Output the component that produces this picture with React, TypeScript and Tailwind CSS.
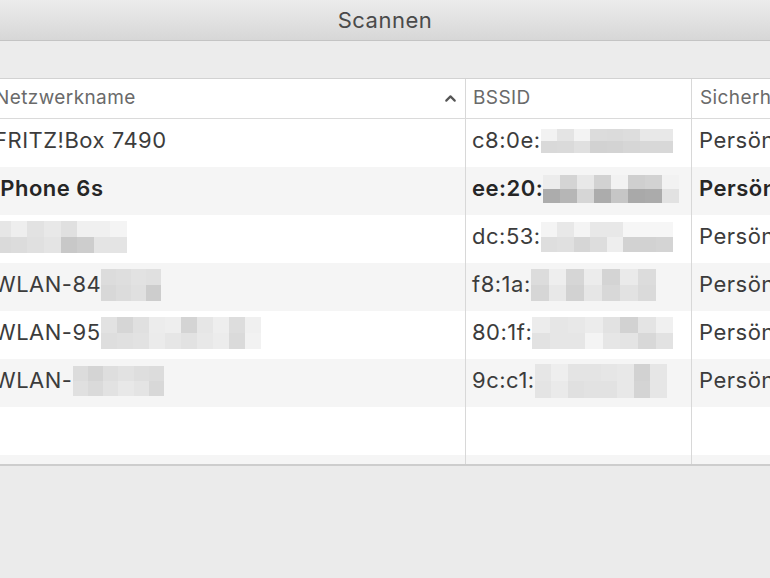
import { ChevronUp } from "lucide-react";

type Blur = { w: number; h: number; top: string[]; bottom: string[] };

type Row = {
  name: string;
  nameBlur?: Blur;
  bssid: string;
  bssidBlur: Blur;
  bold?: boolean;
};

const rows: Row[] = [
  {
    name: "FRITZ!Box 7490",
    bssid: "c8:0e:",
    bssidBlur: {
      w: 132,
      h: 24,
      top: ["#f2f2f2", "#e4e4e4", "#f3f3f3", "#dcdcdc", "#dbdbdb", "#dddddd", "#e8e8e8", "#e8e8e8"],
      bottom: ["#d9d9d9", "#dadada", "#e0e0e0", "#d2d2d2", "#d3d3d3", "#d6d6d6", "#d8d8d8", "#d8d8d8"],
    },
  },
  {
    name: "iPhone 6s",
    bold: true,
    bssid: "ee:20:",
    bssidBlur: {
      w: 136,
      h: 28,
      top: ["#ececec", "#d4d4d4", "#e8e8e8", "#d2d2d2", "#f2f2f2", "#cfcfcf", "#d2d2d2", "#f2f2f2"],
      bottom: ["#acacac", "#b6b6b6", "#d6d6d6", "#acacac", "#c6c6c6", "#a9a9a9", "#ababab", "#e2e2e2"],
    },
  },
  {
    name: "",
    nameBlur: {
      w: 133,
      h: 32,
      top: ["#e6e6e6", "#eeeeee", "#e2e2e2", "#e8e8e8", "#e0e0e0", "#f0f0f0", "#f0f0f0", "#f4f4f4"],
      bottom: ["#dadada", "#dcdcdc", "#e0e0e0", "#e4e4e4", "#c8c8c8", "#cdcdcd", "#e4e4e4", "#e4e4e4"],
    },
    bssid: "dc:53:",
    bssidBlur: {
      w: 132,
      h: 30,
      top: ["#f4f4f4", "#e8e8e8", "#f4f4f4", "#e8e8e8", "#e8e8e8", "#f6f6f6", "#f6f6f6", "#f6f6f6"],
      bottom: ["#dedede", "#e0e0e0", "#d6d6d6", "#dddddd", "#eeeeee", "#d2d2d2", "#d2d2d2", "#d4d4d4"],
    },
  },
  {
    name: "WLAN-84",
    nameBlur: {
      w: 60,
      h: 32,
      top: ["#dcdcdc", "#dedede", "#e2e2e2", "#e0e0e0"],
      bottom: ["#d8d8d8", "#dcdcdc", "#e0e0e0", "#cdcdcd"],
    },
    bssid: "f8:1a:",
    bssidBlur: {
      w: 125,
      h: 32,
      top: ["#dcdcdc", "#eeeeee", "#d6d6d6", "#ececec", "#d4d4d4", "#eaeaea", "#dcdcdc"],
      bottom: ["#d6d6d6", "#e8e8e8", "#d2d2d2", "#e6e6e6", "#d8d8d8", "#e2e2e2", "#dadada"],
    },
  },
  {
    name: "WLAN-95",
    nameBlur: {
      w: 160,
      h: 32,
      top: ["#e2e2e2", "#d6d6d6", "#e0e0e0", "#ececec", "#eeeeee", "#d4d4d4", "#e6e6e6", "#eeeeee", "#dddddd", "#f0f0f0"],
      bottom: ["#dedede", "#e0e0e0", "#e2e2e2", "#ebebeb", "#e6e6e6", "#e2e2e2", "#e8e8e8", "#ececec", "#dadada", "#f2f2f2"],
    },
    bssid: "80:1f:",
    bssidBlur: {
      w: 141,
      h: 32,
      top: ["#ececec", "#e6e6e6", "#e8e8e8", "#ececec", "#e2e2e2", "#d2d2d2", "#e4e4e4", "#f0f0f0"],
      bottom: ["#e2e2e2", "#e6e6e6", "#e6e6e6", "#f4f4f4", "#e6e6e6", "#e4e4e4", "#d8d8d8", "#e2e2e2"],
    },
  },
  {
    name: "WLAN-",
    nameBlur: {
      w: 92,
      h: 30,
      top: ["#dcdcdc", "#d4d4d4", "#dedede", "#e2e2e2", "#dedede", "#dcdcdc"],
      bottom: ["#e0e0e0", "#dadada", "#e2e2e2", "#e8e8e8", "#e4e4e4", "#d8d8d8"],
    },
    bssid: "9c:c1:",
    bssidBlur: {
      w: 132,
      h: 34,
      top: ["#e6e6e6", "#eeeeee", "#e4e4e4", "#e4e4e4", "#e6e6e6", "#e8e8e8", "#d2d2d2", "#e6e6e6"],
      bottom: ["#e4e4e4", "#eaeaea", "#e0e0e0", "#e2e2e2", "#e2e2e2", "#e8e8e8", "#d4d4d4", "#e6e6e6"],
    },
  },
];

function Pixels({ blur }: { blur: Blur }) {
  return (
    <span
      className="inline-flex flex-col shrink-0"
      style={{ width: blur.w, height: blur.h }}
    >
      <span className="flex flex-1">
        {blur.top.map((c, i) => (
          <span key={i} className="flex-1" style={{ backgroundColor: c }} />
        ))}
      </span>
      <span className="flex flex-1">
        {blur.bottom.map((c, i) => (
          <span key={i} className="flex-1" style={{ backgroundColor: c }} />
        ))}
      </span>
    </span>
  );
}

export default function App() {
  return (
    <div className="w-[770px] h-[578px] overflow-hidden bg-[#ebebeb] font-['Inter',sans-serif]">
      <div className="h-[41px] flex items-center justify-center bg-gradient-to-b from-[#ececec] to-[#d7d7d7] border-b border-[#c4c4c4] text-[22px] tracking-[0.5px] text-[#4a4a4a]">
        Scannen
      </div>
      <div className="h-[38px] bg-[#ececec] border-b border-[#d2d2d2]" />

      <div className="flex h-[40px] bg-white border-b border-[#dadada] text-[19px] tracking-[0.4px] text-[#6a6a6a]">
        <div className="w-[466px] shrink-0 border-r border-[#d8d8d8] flex items-center justify-between pr-[6px]">
          <span className="-ml-[5px]">Netzwerkname</span>
          <ChevronUp size={17} strokeWidth={3} className="text-[#555]" />
        </div>
        <div className="w-[226px] shrink-0 border-r border-[#d8d8d8] flex items-center pl-[7px]">
          BSSID
        </div>
        <div className="flex-1 flex items-center pl-[8px] whitespace-nowrap">
          Sicherheit
        </div>
      </div>

      <div className="h-[347px] overflow-hidden bg-white border-b-2 border-[#cdcdcd] text-[22px] tracking-[0.5px] text-[#3c3c3c]">
        {[0, 1, 2, 3, 4, 5, 6, 7].map((i) => {
          const row = rows[i];
          return (
            <div
              key={i}
              className={`flex h-[48px] ${i % 2 === 1 ? "bg-[#f5f5f5]" : "bg-white"} ${row?.bold ? "font-semibold text-[#262626]" : ""}`}
            >
              <div className="w-[466px] shrink-0 border-r border-[#d8d8d8] flex items-center whitespace-nowrap">
                {row && (
                  <span className="-ml-[6px] flex items-center pb-[5px]">
                    {row.name && <span>{row.name}</span>}
                    {row.nameBlur && <Pixels blur={row.nameBlur} />}
                  </span>
                )}
              </div>
              <div className="w-[226px] shrink-0 border-r border-[#d8d8d8] flex items-center pl-[6px] whitespace-nowrap">
                {row && (
                  <span className="flex items-center pb-[5px]">
                    <span>{row.bssid}</span>
                    <Pixels blur={row.bssidBlur} />
                  </span>
                )}
              </div>
              <div className="flex-1 flex items-center pl-[7px] whitespace-nowrap">
                {row && <span className="pb-[5px]">Persönlich</span>}
              </div>
            </div>
          );
        })}
      </div>
    </div>
  );
}
